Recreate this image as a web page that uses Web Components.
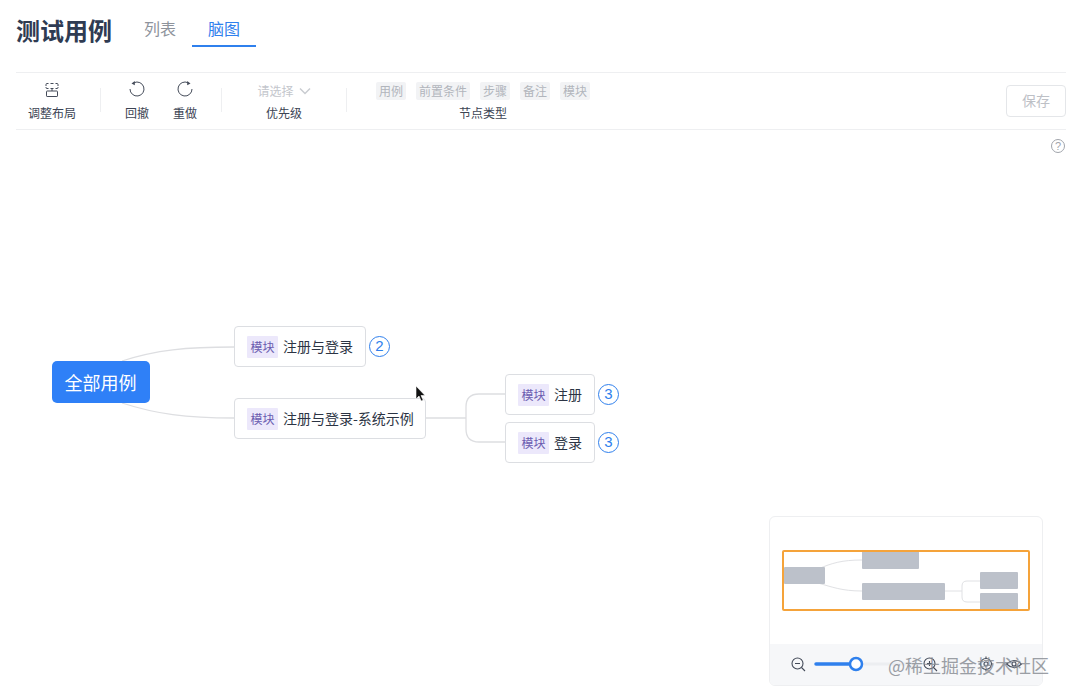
<!DOCTYPE html>
<html lang="zh-CN">
<head>
<meta charset="utf-8">
<title>测试用例</title>
<style>
html,body{margin:0;padding:0;background:#fff;height:100%;overflow:hidden}
body{font-family:"Noto Sans CJK SC","Liberation Sans",sans-serif;color:#333c4d}
</style>
</head>
<body>
<case-app>
  <page-header title="测试用例">
    <tab-item>列表</tab-item>
    <tab-item active>脑图</tab-item>
  </page-header>
  <mind-toolbar>
    <tool-item label="调整布局"><tool-icon name="layout"></tool-icon></tool-item>
    <tool-sep></tool-sep>
    <tool-item label="回撤"><tool-icon name="undo"></tool-icon></tool-item>
    <tool-item label="重做"><tool-icon name="redo"></tool-icon></tool-item>
    <tool-sep></tool-sep>
    <tool-item label="优先级" style="width:76px"><select-box>请选择</select-box></tool-item>
    <tool-sep></tool-sep>
    <tool-item label="节点类型" style="padding:0 17px">
      <tag-row><type-tag>用例</type-tag><type-tag>前置条件</type-tag><type-tag>步骤</type-tag><type-tag>备注</type-tag><type-tag>模块</type-tag></tag-row>
    </tool-item>
    <save-button>保存</save-button>
  </mind-toolbar>
  <mind-canvas>
    <mind-root x="35.5" y="231">全部用例</mind-root>
    <mind-node x="218" y="196" w="132" tag="模块" count="2">注册与登录</mind-node>
    <mind-node x="218" y="268" w="192" tag="模块">注册与登录-系统示例</mind-node>
    <mind-node x="489" y="244" w="90" tag="模块" count="3">注册</mind-node>
    <mind-node x="489" y="292" w="90" tag="模块" count="3">登录</mind-node>
    <mini-map></mini-map>
  </mind-canvas>
</case-app>
<script>
function def(name, css, html, extra){
  customElements.define(name, class extends HTMLElement{
    constructor(){
      super();
      const s=this.attachShadow({mode:'open'});
      s.innerHTML='<style>'+css+'</style>'+(typeof html==='function'?html(this):html);
    }
    connectedCallback(){ if(extra) extra(this); }
  });
}
def('case-app',':host{display:flex;flex-direction:column;height:696px;box-sizing:border-box;padding:0 3px 0 16px}','<slot></slot>');
def('page-header',
 ':host{display:flex;align-items:flex-start;height:73px;box-sizing:border-box;border-bottom:1px solid #eeeff1;flex:none}'+
 'h1{margin:13px 16px 0 0;font-size:24px;line-height:34px;font-weight:700;color:#2f3b52;width:96px;white-space:nowrap}'+
 '.tabs{display:flex;margin-top:13px}',
 function(h){return '<h1>'+h.getAttribute('title')+'</h1><div class="tabs"><slot></slot></div>'});
def('tab-item',
 ':host{display:block;box-sizing:border-box;width:64px;height:34px;text-align:center;font-size:16px;line-height:31px;color:#8e939c;border-bottom:2px solid transparent}'+
 ':host([active]){color:#2f80ed;border-bottom-color:#2f80ed}','<slot></slot>');
def('mind-toolbar',
 ':host{display:flex;align-items:flex-start;height:57px;box-sizing:border-box;border-bottom:1px solid #eeeff1;flex:none}','<slot></slot>');
def('tool-item',
 ':host{display:flex;flex-direction:column;align-items:center;box-sizing:content-box;padding:0 12px;height:56px;flex:none}'+
 '.top{height:32px;display:flex;align-items:center}'+
 '.lab{font-size:12px;line-height:18px;color:#3c4454;margin-top:-1px;white-space:nowrap}',
 function(h){return '<div class="top"><slot></slot></div><div class="lab">'+h.getAttribute('label')+'</div>'});
def('tool-sep',':host{display:block;width:1px;height:24px;background:#eeeff1;margin:15px 12px 0;flex:none}','');
const icons={
 layout:'<path d="M2 5V3.500a1 1 0 0 1 1-1h1.500M6.500 2.500h3M11.500 2.500H13a1 1 0 0 1 1 1V5M14 6v.5a1 1 0 0 1-1 1h-1.500M9.500 7.500h-3M4.500 7.500H3a1 1 0 0 1-1-1V6"/><path d="M8 7.500v2.500"/><rect x="2.500" y="10" width="11" height="5.500" rx=".6"/>',
 undo:'<path d="M5 1.700A7 7 0 1 1 1 8"/><path d="M5.800 0 5.800 4.200 2.500 2.400Z" fill="#444b59" stroke="none"/>',
 redo:'<path d="M11 1.700A7 7 0 1 0 15 8"/><path d="M10.200 0 10.200 4.200 13.500 2.400Z" fill="#444b59" stroke="none"/>'
};
def('tool-icon',':host{display:block;width:16px;height:16px}svg{display:block;overflow:visible;fill:none;stroke:#444b59;stroke-width:1}',
 function(h){return '<svg width="16" height="16" viewBox="0 0 16 16">'+icons[h.getAttribute('name')]+'</svg>'});
def('select-box',
 ':host{display:flex;align-items:center;font-size:12px;color:#c3c6cc;line-height:18px;margin-top:4px}'+
 'svg{margin-left:5px;fill:none;stroke:#c9ccd1;stroke-width:1.500}',
 '<slot></slot><svg width="12" height="8" viewBox="0 0 12 8"><path d="M1 1.500 6 6.500 11 1.500"/></svg>');
def('tag-row',':host{display:flex;gap:10px;margin-top:4px}','<slot></slot>');
def('type-tag',':host{display:block;padding:0 3px;height:18px;line-height:18px;font-size:12px;background:#f2f3f5;color:#b1b5bc;border-radius:2px;white-space:nowrap}','<slot></slot>');
def('save-button',
 ':host{display:block;margin:12px 0 0 auto;box-sizing:border-box;width:60px;height:32px;border:1px solid #e4e6e9;border-radius:4px;text-align:center;font-size:14px;line-height:28px;color:#bdc0c6}','<slot></slot>');
def('mind-canvas',
 ':host{display:block;position:relative;flex:1;min-height:0}'+
 'svg{position:absolute;left:0;top:0;fill:none;stroke:#dddee1;stroke-width:1.300;pointer-events:none}'+
 '.help{left:1035px;top:9px;stroke:#a0a4ab;stroke-width:1}'+
 '.help text{font:11px "Liberation Sans",sans-serif;fill:#a0a4ab;stroke:none}'+
 '.cur{left:399px;top:255px;z-index:5;stroke:#fff;stroke-width:.6;fill:#111}',
 '<svg width="1050" height="566" viewBox="0 0 1050 566">'+
 '<path d="M106 231C140 220 170 217 218 217"/><path d="M106 273C140 284 170 288 218 288"/>'+
 '<path d="M410 288H450"/><path d="M489 264H463Q450 264 450 277V299Q450 312 463 312H489"/></svg>'+
 '<svg class="help" width="14" height="14" viewBox="0 0 14 14"><circle cx="7" cy="7" r="6.500"/><text x="7" y="11" text-anchor="middle">?</text></svg>'+
 '<slot></slot>'+
 '<svg class="cur" width="12" height="18" viewBox="0 0 12 18"><path d="M1 1v13l3-3 2.200 5 2-.8L6 10.500h4z"/></svg>');
def('mind-root',
 ':host{position:absolute;box-sizing:border-box;width:98px;height:42px;background:#2f80f7;border-radius:5px;color:#fff;font-size:18px;line-height:42px;text-align:center;white-space:nowrap}','<slot></slot>',
 function(h){h.style.left=h.getAttribute('x')+'px';h.style.top=h.getAttribute('y')+'px'});
def('mind-node',
 ':host{position:absolute;display:flex;align-items:center;box-sizing:border-box;height:41px;padding-left:12px;background:#fff;border:1px solid #dcdee2;border-radius:4px;font-size:14px;color:#2c3444;white-space:nowrap}'+
 '.tag{width:31px;height:22px;line-height:22px;text-align:center;font-size:12px;background:#ece8fb;color:#6a5bb0;margin-right:5px;flex:none;border-radius:1px}'+
 '.txt{margin-bottom:2px}'+
 '.cnt{position:absolute;box-sizing:border-box;left:calc(100% + 4px);top:9px;width:21px;height:21px;border:1.500px solid #2f80ed;border-radius:50%;text-align:center;color:#2f80ed;font-size:15px;line-height:18px;font-family:"Liberation Sans",sans-serif}',
 function(h){const c=h.getAttribute('count');return '<span class="tag">'+h.getAttribute('tag')+'</span><span class="txt"><slot></slot></span>'+(c?'<span class="cnt">'+c+'</span>':'')},
 function(h){h.style.left=h.getAttribute('x')+'px';h.style.top=h.getAttribute('y')+'px';h.style.width=h.getAttribute('w')+'px'});
def('mini-map',
 ':host{position:absolute;left:753px;top:386px;width:274px;height:170px;box-sizing:border-box;border:1px solid #eeeff1;border-radius:6px;background:#fff;display:flex;flex-direction:column;justify-content:flex-end}'+
 '.view{position:absolute;left:0;top:0}'+
 '.bar{position:relative;height:41px;background:#f6f7f9;border-radius:0 0 5px 5px;flex:none}'+
 '.ctl{position:absolute;left:0;top:0;overflow:visible;fill:none;stroke:#444b59;stroke-width:1.100}'+
 '.wm{position:absolute;left:118px;top:9px;font-size:18px;line-height:24px;color:#8b8f96;opacity:.85;white-space:nowrap;letter-spacing:0}',
 '<svg class="view" width="272" height="128" viewBox="0 0 272 128">'+
 '<path d="M48 52C62 46 72 43 92 43M48 66C62 70 72 74 92 74M175 74H192M210 64H197Q192 64 192 69V80Q192 85 197 85H210" fill="none" stroke="#e0e1e4" stroke-width="1"/>'+
 '<g fill="#bcc1ca"><rect x="92" y="34" width="57" height="18" rx="1"/><rect x="14" y="50" width="41" height="17" rx="1"/><rect x="92" y="66" width="83" height="17" rx="1"/><rect x="210" y="55" width="38" height="17" rx="1"/><rect x="210" y="76" width="38" height="17" rx="1"/></g>'+
 '<rect x="13" y="34" width="246" height="59" rx="1" fill="none" stroke="#f5a33a" stroke-width="2"/></svg>'+
 '<div class="bar">'+
 '<svg class="ctl" width="272" height="41" viewBox="0 0 272 41">'+
 '<circle cx="27.500" cy="19.500" r="5.500"/><path d="M25 19.500h5M31.500 23.500l3.500 3.500"/>'+
 '<path d="M92 20H144" stroke="#eceef1" stroke-width="3"/>'+
 '<path d="M46 20H86" stroke="#2f80ed" stroke-width="3.500" stroke-linecap="round"/>'+
 '<circle cx="86" cy="20" r="6" fill="#fff" stroke="#2f80ed" stroke-width="2.500"/>'+
 '<circle cx="159.500" cy="19.500" r="5.500"/><path d="M157 19.500h5M159.500 17v5M163.500 23.500l3.500 3.500"/>'+
 '<circle cx="216" cy="20" r="5.500"/><circle cx="216" cy="20" r="2"/><path d="M216 12.500v2M216 25.500v2M208.500 20h2M221.500 20h2"/>'+
 '<path d="M236.500 20Q244 13 251.500 20Q244 27 236.500 20Z"/><circle cx="244" cy="20" r="2"/>'+
 '</svg><div class="wm">@稀土掘金技术社区</div></div>');
</script>
</body>
</html>
